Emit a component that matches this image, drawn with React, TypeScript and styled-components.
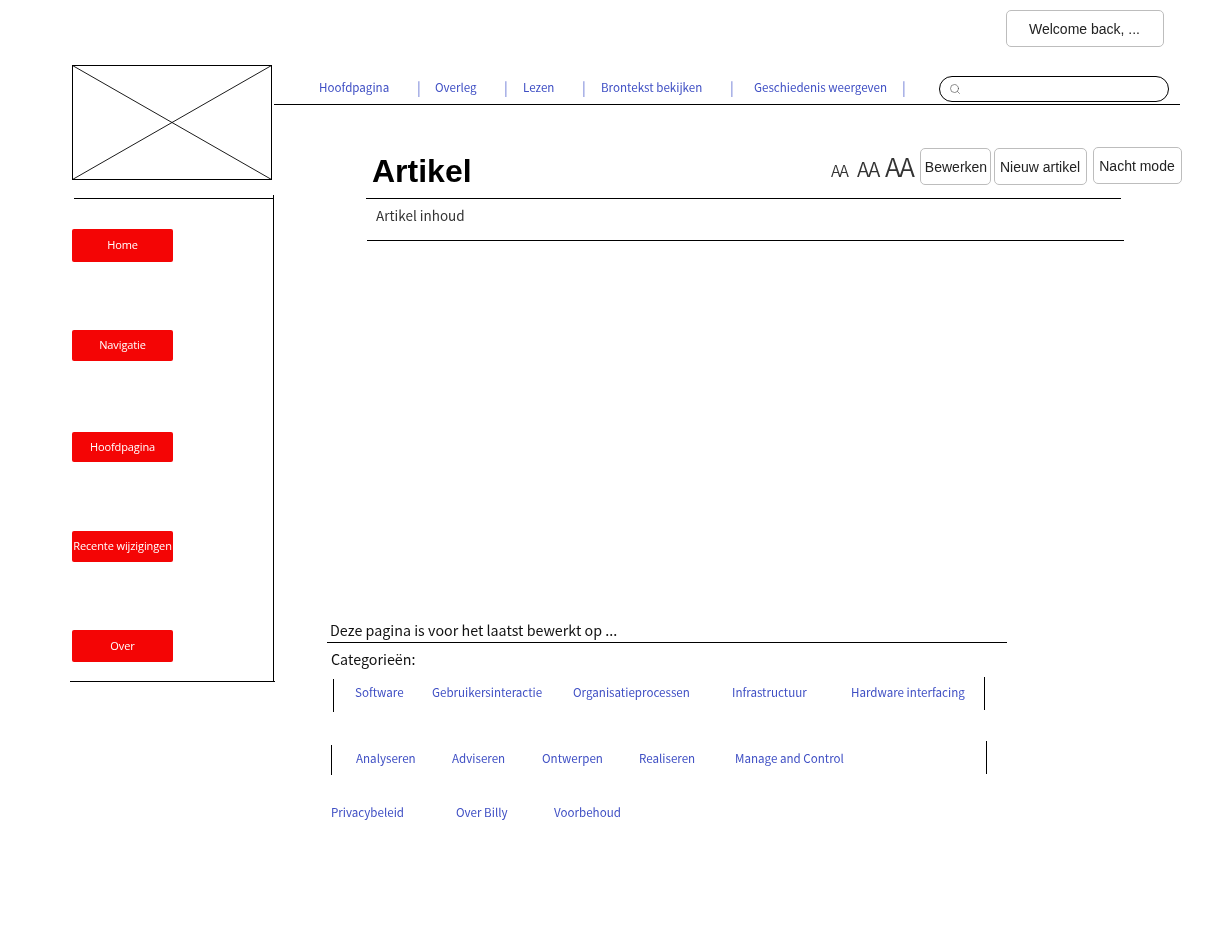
import { Fragment } from "react";
import { Search } from "lucide-react";
import styled, { createGlobalStyle } from "styled-components";

const GlobalStyle = createGlobalStyle`
  html, body {
    margin: 0;
    padding: 0;
    background: #fff;
  }
`;

const Page = styled.div`
  width: 1231px;
  height: 941px;
  overflow: hidden;
  padding-top: 10px;
  box-sizing: border-box;
  font-family: "Noto Sans CJK SC", "Noto Sans", sans-serif;
  will-change: transform;
`;

const TopBar = styled.div`
  display: flex;
  padding-left: 1006px;
`;

const OutlineButton = styled.button<{ $w: number; $mt?: number; $ml?: number; $shift?: number }>`
  width: ${(p) => p.$w}px;
  height: 37px;
  margin: ${(p) => p.$mt ?? 0}px 0 0 ${(p) => p.$ml ?? 0}px;
  padding: 0;
  flex: none;
  box-sizing: border-box;
  background: #fff;
  border: 1px solid #bdbdbd;
  border-radius: 5px;
  color: #222;
  font-family: "Liberation Sans", Arial, sans-serif;
  font-size: 14px;
  text-indent: ${(p) => p.$shift ?? 0}px;
`;

const Layout = styled.div`
  display: flex;
  padding-left: 70px;
`;

const Sidebar = styled.aside`
  width: 204px;
  flex: none;
  padding-top: 18px;
`;

const Logo = styled.svg`
  display: block;
  margin-left: 2px;
`;

const SidePanel = styled.nav`
  width: 204px;
  height: 487px;
  margin-top: 15px;
  padding-top: 3px;
  box-sizing: border-box;
  border-right: 1px solid #000;
  display: flex;
  flex-direction: column;
`;

const SideTopRule = styled.div`
  height: 1px;
  margin-left: 4px;
  background: #000;
`;

const SideBottomRule = styled.div`
  width: 205px;
  height: 1px;
  margin-top: auto;
  background: #000;
  flex: none;
`;

const SideButton = styled.div<{ $h: number; $mt: number }>`
  width: 101px;
  height: ${(p) => p.$h}px;
  margin: ${(p) => p.$mt}px 0 0 2px;
  padding-bottom: 2px;
  box-sizing: border-box;
  flex: none;
  display: flex;
  align-items: center;
  justify-content: center;
  background: #f40505;
  border-radius: 2px;
  color: #fff;
  font-family: "Open Sans", sans-serif;
  font-size: 11px;
  white-space: nowrap;
  letter-spacing: -0.1px;
`;

const Main = styled.main`
  width: 910px;
  flex: none;
`;

const NavRow = styled.div`
  width: 906px;
  height: 29px;
  margin-top: 29px;
  padding-left: 45px;
  box-sizing: border-box;
  border-bottom: 1px solid #000;
  display: flex;
  align-items: flex-start;
`;

const LinkCell = styled.a<{ $w: number; $lh: number }>`
  width: ${(p) => p.$w}px;
  flex: none;
  line-height: ${(p) => p.$lh}px;
  color: #3f4fc4;
  font-size: 11.6px;
  white-space: nowrap;
`;

const NavSeparator = styled.span<{ $w: number }>`
  width: ${(p) => p.$w}px;
  flex: none;
  line-height: 23px;
  color: #6f7cd6;
  font-size: 14px;
  text-indent: -1px;
`;

const SearchBox = styled.div`
  width: 230px;
  height: 26px;
  flex: none;
  box-sizing: border-box;
  border: 1px solid #000;
  border-radius: 13px;
  padding-left: 9px;
  display: flex;
  align-items: center;
  color: #444;
`;

const TitleRow = styled.div`
  display: flex;
  align-items: flex-start;
  height: 93px;
  padding-left: 98px;
`;

const Title = styled.h1`
  width: 459px;
  flex: none;
  margin: 46px 0 0;
  line-height: 40px;
  color: #000;
  font-family: "Liberation Sans", Arial, sans-serif;
  font-size: 32px;
  font-weight: 700;
`;

const SizeToggles = styled.div`
  width: 89px;
  flex: none;
  margin-top: 46px;
  display: flex;
  align-items: baseline;
`;

const SizeToggle = styled.span<{ $w: number; $size: number }>`
  width: ${(p) => p.$w}px;
  flex: none;
  line-height: 30px;
  color: #333;
  font-size: ${(p) => p.$size}px;
  font-weight: 350;
  letter-spacing: -1.3px;
`;

const Rule = styled.div<{ $ml: number; $w: number; $mt?: number }>`
  width: ${(p) => p.$w}px;
  height: 1px;
  margin: ${(p) => p.$mt ?? 0}px 0 0 ${(p) => p.$ml}px;
  background: #000;
`;

const BodyText = styled.div`
  height: 41px;
  margin-left: 102px;
  line-height: 32px;
  color: #333;
  font-size: 13.5px;
`;

const LastEdited = styled.div`
  margin: 379px 0 0 56px;
  line-height: 20px;
  color: #111;
  font-size: 14.3px;
`;

const CategoriesLabel = styled.div`
  margin: 6px 0 0 57px;
  line-height: 20px;
  color: #111;
  font-size: 14.3px;
`;

const CategoryRow = styled.div<{ $mt: number; $ml: number; $h: number }>`
  display: flex;
  align-items: flex-start;
  height: ${(p) => p.$h}px;
  margin: ${(p) => p.$mt}px 0 0 ${(p) => p.$ml}px;
`;

const Bar = styled.div<{ $h: number; $mt?: number }>`
  width: 1px;
  height: ${(p) => p.$h}px;
  margin-top: ${(p) => p.$mt ?? 0}px;
  flex: none;
  background: #000;
`;

const LinkList = styled.div<{ $w: number; $pad: number }>`
  width: ${(p) => p.$w}px;
  flex: none;
  padding-left: ${(p) => p.$pad}px;
  box-sizing: border-box;
  display: flex;
`;

const navItems = [
  { label: "Hoofdpagina", w: 99, sep: 17 },
  { label: "Overleg", w: 70, sep: 18 },
  { label: "Lezen", w: 60, sep: 18 },
  { label: "Brontekst bekijken", w: 130, sep: 23 },
  { label: "Geschiedenis weergeven", w: 149, sep: 36 },
];

const sideItems = [
  { label: "Home", h: 33, mt: 30 },
  { label: "Navigatie", h: 31, mt: 68 },
  { label: "Hoofdpagina", h: 30, mt: 71 },
  { label: "Recente wijzigingen", h: 31, mt: 69 },
  { label: "Over", h: 32, mt: 68 },
];

const softwareLinks = [
  { label: "Software", w: 77 },
  { label: "Gebruikersinteractie", w: 141 },
  { label: "Organisatieprocessen", w: 159 },
  { label: "Infrastructuur", w: 119 },
  { label: "Hardware interfacing", w: 120 },
];

const processLinks = [
  { label: "Analyseren", w: 96 },
  { label: "Adviseren", w: 90 },
  { label: "Ontwerpen", w: 97 },
  { label: "Realiseren", w: 96 },
  { label: "Manage and Control", w: 120 },
];

const footerLinks = [
  { label: "Privacybeleid", w: 125 },
  { label: "Over Billy", w: 98 },
  { label: "Voorbehoud", w: 90 },
];

export default function App() {
  return (
    <Page>
      <GlobalStyle />
      <TopBar>
        <OutlineButton $w={158} $shift={-1}>Welcome back, ...</OutlineButton>
      </TopBar>
      <Layout>
        <Sidebar>
          <Logo width="200" height="115" viewBox="0 0 200 115">
            <rect x="0.5" y="0.5" width="199" height="114" fill="#fff" stroke="#000" />
            <path d="M0.5 0.5 L199.5 114.5 M199.5 0.5 L0.5 114.5" stroke="#000" strokeWidth="0.9" fill="none" />
          </Logo>
          <SidePanel>
            <SideTopRule />
            {sideItems.map((item) => (
              <SideButton key={item.label} $h={item.h} $mt={item.mt}>
                {item.label}
              </SideButton>
            ))}
            <SideBottomRule />
          </SidePanel>
        </Sidebar>
        <Main>
          <NavRow>
            {navItems.map((item) => (
              <Fragment key={item.label}>
                <LinkCell $w={item.w} $lh={23}>
                  {item.label}
                </LinkCell>
                <NavSeparator $w={item.sep}>|</NavSeparator>
              </Fragment>
            ))}
            <SearchBox>
              <Search size={12} strokeWidth={1.2} />
            </SearchBox>
          </NavRow>
          <TitleRow>
            <Title>Artikel</Title>
            <SizeToggles>
              <SizeToggle $w={26} $size={16}>AA</SizeToggle>
              <SizeToggle $w={28} $size={20.5}>AA</SizeToggle>
              <SizeToggle $w={35} $size={26}>AA</SizeToggle>
            </SizeToggles>
            <OutlineButton $w={71} $mt={43} $shift={1}>Bewerken</OutlineButton>
            <OutlineButton $w={93} $mt={43} $ml={3} $shift={-1}>Nieuw artikel</OutlineButton>
            <OutlineButton $w={89} $mt={42} $ml={6} $shift={-1}>Nacht mode</OutlineButton>
          </TitleRow>
          <Rule $ml={92} $w={755} />
          <BodyText>Artikel inhoud</BodyText>
          <Rule $ml={93} $w={757} />
          <LastEdited>Deze pagina is voor het laatst bewerkt op ...</LastEdited>
          <Rule $ml={53} $w={680} $mt={2} />
          <CategoriesLabel>Categorieën:</CategoriesLabel>
          <CategoryRow $mt={8} $ml={59} $h={35}>
            <Bar $h={33} $mt={2} />
            <LinkList $w={650} $pad={21}>
              {softwareLinks.map((link) => (
                <LinkCell key={link.label} $w={link.w} $lh={30}>{link.label}</LinkCell>
              ))}
            </LinkList>
            <Bar $h={33} />
          </CategoryRow>
          <CategoryRow $mt={29} $ml={57} $h={34}>
            <Bar $h={30} $mt={4} />
            <LinkList $w={654} $pad={24}>
              {processLinks.map((link) => (
                <LinkCell key={link.label} $w={link.w} $lh={34}>{link.label}</LinkCell>
              ))}
            </LinkList>
            <Bar $h={33} />
          </CategoryRow>
          <CategoryRow $mt={27} $ml={57} $h={20}>
            <LinkList $w={654} $pad={0}>
              {footerLinks.map((link) => (
                <LinkCell key={link.label} $w={link.w} $lh={20}>{link.label}</LinkCell>
              ))}
            </LinkList>
          </CategoryRow>
        </Main>
      </Layout>
    </Page>
  );
}
